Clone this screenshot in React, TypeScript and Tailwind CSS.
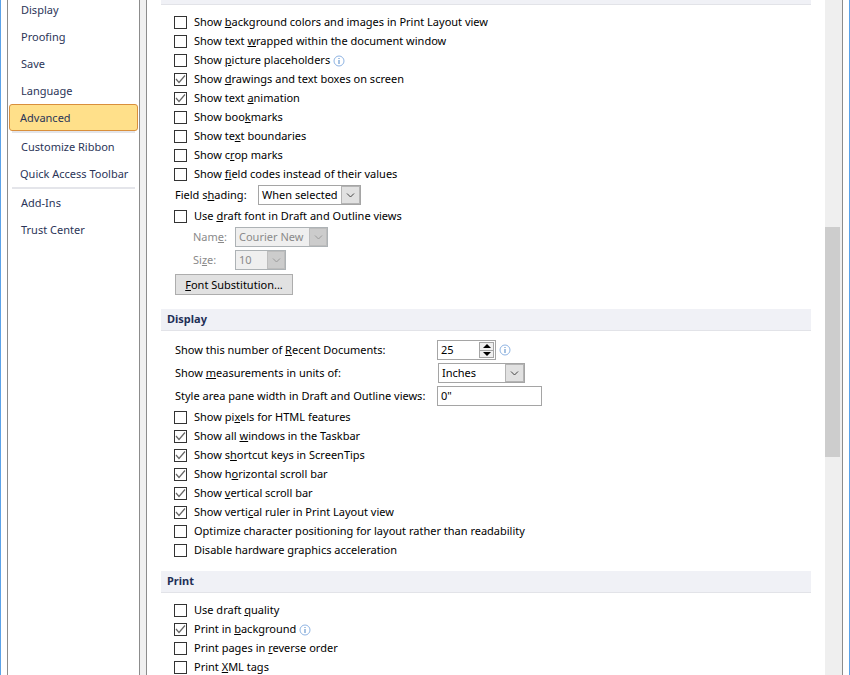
import type { ReactNode } from "react";

function Info() {
  return (
    <svg width="12" height="12" viewBox="0 0 12 12" className="shrink-0">
      <circle cx="6" cy="6" r="5" fill="#fff" stroke="#8fb4e3" />
      <rect x="5.5" y="5" width="1" height="4" fill="#4f86c6" />
      <rect x="5.5" y="3" width="1" height="1" fill="#4f86c6" />
    </svg>
  );
}

function Chevron({ color = "#444" }: { color?: string }) {
  return (
    <svg width="9" height="5" viewBox="0 0 9 5">
      <path d="M1 0.5 L4.5 4 L8 0.5" fill="none" stroke={color} />
    </svg>
  );
}

function Check({ label, checked, info }: { label: ReactNode; checked?: boolean; info?: boolean }) {
  return (
    <div className="flex h-[19px] items-center pl-[13px]">
      <span className="mr-[7px] flex h-[13px] w-[13px] shrink-0 items-center justify-center border border-[#333] bg-white">
        {checked && (
          <svg width="11" height="11" viewBox="0 0 11 11">
            <path d="M1 5 L4 8.5 L10 1.5" fill="none" stroke="#666" strokeWidth="1.2" />
          </svg>
        )}
      </span>
      <span className="whitespace-nowrap">{label}</span>
      {info && (
        <span className="ml-[3px]">
          <Info />
        </span>
      )}
    </div>
  );
}

function Section({ title }: { title: string }) {
  return (
    <div className="flex h-[22px] items-center border-b border-[#e2e3e8] bg-[#f0f1f6] pl-[6px] font-bold text-[#1f2f56]">
      {title}
    </div>
  );
}

function Combo({ value, width, button, disabled }: { value: string; width: string; button: string; disabled?: boolean }) {
  return (
    <div
      className={`flex h-[20px] items-stretch border ${width} ${
        disabled ? "border-[#adb2b5] bg-[#efefef] text-[#8a8a8a]" : "border-[#a5a5a5] bg-white"
      }`}
    >
      <span className="flex-1 whitespace-nowrap pl-[3px] leading-[18px]">{value}</span>
      <span
        className={`flex items-center justify-center border ${button} ${
          disabled ? "border-[#bdbdbd] bg-[#cccccc]" : "border-[#b4b4b4] bg-[#e1e1e1]"
        }`}
      >
        <Chevron color={disabled ? "#9a9a9a" : "#444"} />
      </span>
    </div>
  );
}

const menuTop = ["Display", "Proofing", "Save", "Language"];

function MenuItem({ children, left = "pl-[13px]" }: { children: ReactNode; left?: string }) {
  return <div className={`flex h-[27px] items-center pt-[1px] ${left}`}>{children}</div>;
}

export default function App() {
  return (
    <div
      className="flex h-[675px] w-[850px] overflow-hidden border-x border-x-[#5aa2e8] bg-white text-[11px] text-black"
      style={{ fontFamily: '"Noto Sans", sans-serif' }}
    >
      <div className="ml-[6px] w-[133px] shrink-0 border-x border-[#8c8c8c] bg-white text-[#2b3558]">
        <div className="-mt-[4px]">
          {menuTop.map((m) => (
            <MenuItem key={m}>{m}</MenuItem>
          ))}
          <div className="mx-[1px] flex h-[27px] items-center rounded-[3px] border border-[#d98f3c] bg-[#ffe08a] pl-[10px] pt-[1px]">
            Advanced
          </div>
          <div className="mx-[4px] h-[2px] bg-[#e4e5ea]" />
          <MenuItem>Customize Ribbon</MenuItem>
          <MenuItem left="pl-[12px]">Quick Access Toolbar</MenuItem>
          <div className="mx-[4px] h-[2px] bg-[#e4e5ea]" />
          <MenuItem>Add-Ins</MenuItem>
          <MenuItem>Trust Center</MenuItem>
        </div>
      </div>

      <div className="w-[6px] shrink-0 bg-[#f0f0f0]" />

      <div className="flex min-w-0 flex-1 border-l border-[#8c8c8c]">
        <div className="w-[678px] shrink-0 pl-[14px] pr-[14px]">
          <div className="h-[5px] border-b border-[#e2e3e8] bg-[#f0f1f6]" />
          <div className="mt-[8px]">
            <Check label={<>Show <u>b</u>ackground colors and images in Print Layout view</>} />
            <Check label={<>Show text <u>w</u>rapped within the document window</>} />
            <Check info label={<>Show <u>p</u>icture placeholders</>} />
            <Check checked label={<>Show <u>d</u>rawings and text boxes on screen</>} />
            <Check checked label={<>Show text <u>a</u>nimation</>} />
            <Check label={<>Show boo<u>k</u>marks</>} />
            <Check label={<>Show te<u>x</u>t boundaries</>} />
            <Check label={<>Show c<u>r</u>op marks</>} />
            <Check label={<>Show <u>f</u>ield codes instead of their values</>} />
          </div>
          <div className="mt-[1px] flex items-center pl-[14px]">
            <span className="w-[83px]">Field s<u>h</u>ading:</span>
            <Combo value="When selected" width="w-[103px]" button="w-[19px]" />
          </div>
          <div className="mt-[2px]">
            <Check label={<>Use <u>d</u>raft font in Draft and Outline views</>} />
          </div>
          <div className="mt-[1px] flex items-center pl-[32px] text-[#8a8a8a]">
            <span className="w-[42px]">Nam<u>e</u>:</span>
            <Combo disabled value="Courier New" width="w-[93px]" button="w-[18px]" />
          </div>
          <div className="mt-[3px] flex items-center pl-[32px] text-[#8a8a8a]">
            <span className="w-[42px]">Si<u>z</u>e:</span>
            <Combo disabled value="10" width="w-[51px]" button="w-[18px]" />
          </div>
          <button className="ml-[14px] mt-[4px] flex h-[21px] w-[118px] items-center justify-center border border-[#adadad] bg-[#e1e1e1] pt-[1px]">
            <span><u>F</u>ont Substitution...</span>
          </button>

          <div className="mt-[14px]">
            <Section title="Display" />
          </div>
          <div className="mt-[9px] flex items-center pl-[14px]">
            <span className="w-[262px]">Show this number of <u>R</u>ecent Documents:</span>
            <div className="flex h-[20px] w-[59px] items-stretch border border-[#a5a5a5] py-[1px] pr-[1px]">
              <span className="flex-1 pl-[3px] leading-[16px]">25</span>
              <span className="flex w-[15px] flex-col border border-[#a5a5a5] bg-[#f0f0f0]">
                <span className="flex flex-1 items-center justify-center border-b border-[#a5a5a5]">
                  <span className="h-0 w-0 border-x-[4px] border-b-[4px] border-x-transparent border-b-black" />
                </span>
                <span className="flex flex-1 items-center justify-center">
                  <span className="h-0 w-0 border-x-[4px] border-t-[4px] border-x-transparent border-t-black" />
                </span>
              </span>
            </div>
            <span className="ml-[3px]">
              <Info />
            </span>
          </div>
          <div className="mt-[3px] flex items-center pl-[14px]">
            <span className="w-[263px]">Show <u>m</u>easurements in units of:</span>
            <Combo value="Inches" width="w-[87px]" button="w-[19px]" />
          </div>
          <div className="mt-[3px] flex items-center pl-[14px]">
            <span className="w-[262px] whitespace-nowrap">Style area pane width in Draft and Outline views:</span>
            <div className="h-[20px] w-[105px] border border-[#a5a5a5] pl-[3px] leading-[18px]">0"</div>
          </div>
          <div className="mt-[2px]">
            <Check label={<>Show pi<u>x</u>els for HTML features</>} />
            <Check checked label={<>Show all <u>w</u>indows in the Taskbar</>} />
            <Check checked label={<>Show s<u>h</u>ortcut keys in ScreenTips</>} />
            <Check checked label={<>Show h<u>o</u>rizontal scroll bar</>} />
            <Check checked label={<>Show <u>v</u>ertical scroll bar</>} />
            <Check checked label={<>Show verti<u>c</u>al ruler in Print Layout view</>} />
            <Check label={<>Optimize character positioning for layout rather than readability</>} />
            <Check label={<>Disable hardware <u>g</u>raphics acceleration</>} />
          </div>

          <div className="mt-[11px]">
            <Section title="Print" />
          </div>
          <div className="mt-[8px]">
            <Check label={<>Use draft <u>q</u>uality</>} />
            <Check checked info label={<>Print in <u>b</u>ackground</>} />
            <Check label={<>Print pages in <u>r</u>everse order</>} />
            <Check label={<>Print <u>X</u>ML tags</>} />
          </div>
        </div>

        <div className="w-[17px] shrink-0 bg-[#efefef]">
          <div className="mt-[227px] h-[230px] w-[15px] bg-[#cdcdcd]" />
        </div>
        <div className="w-[7px] border-l border-[#8c8c8c] bg-white" />
      </div>
    </div>
  );
}
